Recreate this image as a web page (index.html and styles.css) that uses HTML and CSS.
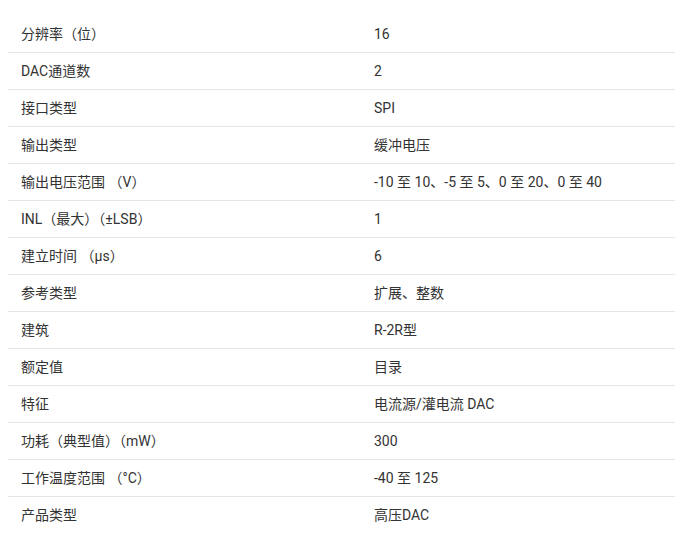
FILE: index.html
```html
<!DOCTYPE html>
<html lang="zh-CN">
<head>
<meta charset="utf-8">
<title>参数</title>
<link rel="stylesheet" href="styles.css">
</head>
<body>
<div class="spec">
  <div class="row"><div class="k">分辨率（位）</div><div class="v">16</div></div>
  <div class="row"><div class="k">DAC通道数</div><div class="v">2</div></div>
  <div class="row"><div class="k">接口类型</div><div class="v">SPI</div></div>
  <div class="row"><div class="k">输出类型</div><div class="v">缓冲电压</div></div>
  <div class="row"><div class="k">输出电压范围 （V）</div><div class="v">-10 至 10、-5 至 5、0 至 20、0 至 40</div></div>
  <div class="row"><div class="k">INL（最大）（±LSB）</div><div class="v">1</div></div>
  <div class="row"><div class="k">建立时间 （μs）</div><div class="v">6</div></div>
  <div class="row"><div class="k">参考类型</div><div class="v">扩展、整数</div></div>
  <div class="row"><div class="k">建筑</div><div class="v">R-2R型</div></div>
  <div class="row"><div class="k">额定值</div><div class="v">目录</div></div>
  <div class="row"><div class="k">特征</div><div class="v">电流源/灌电流 DAC</div></div>
  <div class="row"><div class="k">功耗（典型值）（mW）</div><div class="v">300</div></div>
  <div class="row"><div class="k">工作温度范围 （°C）</div><div class="v">-40 至 125</div></div>
  <div class="row"><div class="k">产品类型</div><div class="v">高压DAC</div></div>
</div>
</body>
</html>
```
FILE: styles.css
```css
html, body {
  margin: 0;
  background: #ffffff;
}
body {
  padding: 16px 8px 0 8px;
  font-family: Roboto, "Noto Sans CJK SC", sans-serif;
  font-size: 14px;
  color: #333333;
}
.spec {
  width: 667px;
}
.row {
  display: grid;
  grid-template-columns: 353px 1fr;
  height: 36px;
  align-items: center;
  border-bottom: 1px solid #e6e6e6;
}
.k, .v {
  padding-left: 13px;
  white-space: nowrap;
  line-height: 20px;
}
```
